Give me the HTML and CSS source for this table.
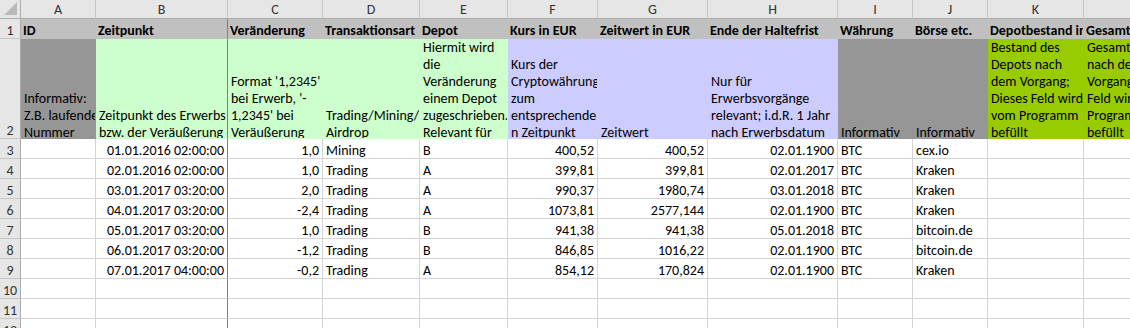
FILE: index.html
```html
<!DOCTYPE html>
<html lang="de">
<head>
<meta charset="utf-8">
<title>Transaktionen</title>
<link rel="stylesheet" href="styles.css">
</head>
<body>
<div class="sheet">
  <div class="corner"><span class="tri"></span></div>
  <div class="ch">A</div><div class="ch">B</div><div class="ch">C</div><div class="ch">D</div><div class="ch">E</div><div class="ch">F</div><div class="ch">G</div><div class="ch">H</div><div class="ch">I</div><div class="ch">J</div><div class="ch">K</div><div class="ch">L</div>

  <div class="rh">1</div>
  <div class="c hd">ID</div>
  <div class="c hd colb">Zeitpunkt</div>
  <div class="c hd">Veränderung</div>
  <div class="c hd">Transaktionsart</div>
  <div class="c hd">Depot</div>
  <div class="c hd">Kurs in EUR</div>
  <div class="c hd">Zeitwert in EUR</div>
  <div class="c hd">Ende der Haltefrist</div>
  <div class="c hd">Währung</div>
  <div class="c hd">Börse etc.</div>
  <div class="c hd">Depotbestand in EUR</div>
  <div class="c hd">Gesamtbestand</div>

  <div class="rh rh-tall">2</div>
  <div class="c ds gray">Informativ:<br>Z.B. laufende<br>Nummer</div>
  <div class="c ds green colb">Zeitpunkt des Erwerbs<br>bzw. der Veräußerung</div>
  <div class="c ds green">Format '1,2345'<br>bei Erwerb, '-<br>1,2345' bei<br>Veräußerung</div>
  <div class="c ds green">Trading/Mining/<br>Airdrop</div>
  <div class="c ds green">Hiermit wird<br>die<br>Veränderung<br>einem Depot<br>zugeschrieben.<br>Relevant für</div>
  <div class="c ds lav">Kurs der<br>Cryptowährung<br>zum<br>entsprechende<br>n Zeitpunkt</div>
  <div class="c ds lav">Zeitwert</div>
  <div class="c ds lav">Nur für<br>Erwerbsvorgänge<br>relevant; i.d.R. 1 Jahr<br>nach Erwerbsdatum</div>
  <div class="c ds gray">Informativ</div>
  <div class="c ds gray">Informativ</div>
  <div class="c ds lime">Bestand des<br>Depots nach<br>dem Vorgang;<br>Dieses Feld wird<br>vom Programm<br>befüllt</div>
  <div class="c ds lime">Gesamtbestand<br>nach dem<br>Vorgang; Dieses<br>Feld wird vom<br>Programm<br>befüllt</div>

  <div class="rh">3</div>
  <div class="c"></div><div class="c r colb">01.01.2016 02:00:00</div><div class="c r">1,0</div><div class="c">Mining</div><div class="c">B</div><div class="c r">400,52</div><div class="c r">400,52</div><div class="c r">02.01.1900</div><div class="c">BTC</div><div class="c">cex.io</div><div class="c"></div><div class="c"></div>

  <div class="rh">4</div>
  <div class="c"></div><div class="c r colb">02.01.2016 02:00:00</div><div class="c r">1,0</div><div class="c">Trading</div><div class="c">A</div><div class="c r">399,81</div><div class="c r">399,81</div><div class="c r">02.01.2017</div><div class="c">BTC</div><div class="c">Kraken</div><div class="c"></div><div class="c"></div>

  <div class="rh">5</div>
  <div class="c"></div><div class="c r colb">03.01.2017 03:20:00</div><div class="c r">2,0</div><div class="c">Trading</div><div class="c">A</div><div class="c r">990,37</div><div class="c r">1980,74</div><div class="c r">03.01.2018</div><div class="c">BTC</div><div class="c">Kraken</div><div class="c"></div><div class="c"></div>

  <div class="rh">6</div>
  <div class="c"></div><div class="c r colb">04.01.2017 03:20:00</div><div class="c r">-2,4</div><div class="c">Trading</div><div class="c">A</div><div class="c r">1073,81</div><div class="c r">2577,144</div><div class="c r">02.01.1900</div><div class="c">BTC</div><div class="c">Kraken</div><div class="c"></div><div class="c"></div>

  <div class="rh">7</div>
  <div class="c"></div><div class="c r colb">05.01.2017 03:20:00</div><div class="c r">1,0</div><div class="c">Trading</div><div class="c">B</div><div class="c r">941,38</div><div class="c r">941,38</div><div class="c r">05.01.2018</div><div class="c">BTC</div><div class="c">bitcoin.de</div><div class="c"></div><div class="c"></div>

  <div class="rh">8</div>
  <div class="c"></div><div class="c r colb">06.01.2017 03:20:00</div><div class="c r">-1,2</div><div class="c">Trading</div><div class="c">B</div><div class="c r">846,85</div><div class="c r">1016,22</div><div class="c r">02.01.1900</div><div class="c">BTC</div><div class="c">bitcoin.de</div><div class="c"></div><div class="c"></div>

  <div class="rh">9</div>
  <div class="c"></div><div class="c r colb">07.01.2017 04:00:00</div><div class="c r">-0,2</div><div class="c">Trading</div><div class="c">A</div><div class="c r">854,12</div><div class="c r">170,824</div><div class="c r">02.01.1900</div><div class="c">BTC</div><div class="c">Kraken</div><div class="c"></div><div class="c"></div>

  <div class="rh">10</div>
  <div class="c"></div><div class="c colb"></div><div class="c"></div><div class="c"></div><div class="c"></div><div class="c"></div><div class="c"></div><div class="c"></div><div class="c"></div><div class="c"></div><div class="c"></div><div class="c"></div>

  <div class="rh">11</div>
  <div class="c"></div><div class="c colb"></div><div class="c"></div><div class="c"></div><div class="c"></div><div class="c"></div><div class="c"></div><div class="c"></div><div class="c"></div><div class="c"></div><div class="c"></div><div class="c"></div>

  <div class="rh">12</div>
  <div class="c"></div><div class="c colb"></div><div class="c"></div><div class="c"></div><div class="c"></div><div class="c"></div><div class="c"></div><div class="c"></div><div class="c"></div><div class="c"></div><div class="c"></div><div class="c"></div>
</div>
</body>
</html>
```

FILE: styles.css
```css
html, body {
  margin: 0;
  padding: 0;
  background: #ffffff;
  overflow: hidden;
}

.sheet {
  display: grid;
  grid-template-columns: 21px 75px 132px 95px 97px 88px 90px 110px 130px 75px 75px 96px 150px;
  grid-template-rows: 19px 20px 100px repeat(10, 20px);
  width: 1130px;
  height: 328px;
  overflow: hidden;
  font-family: Carlito, Calibri, "Liberation Sans", sans-serif;
  font-size: 14px;
  color: #000;
}

.corner {
  position: relative;
  background: #e6e6e6;
  border-right: 1px solid #ababab;
  border-bottom: 1px solid #ababab;
  box-sizing: border-box;
}

.tri {
  position: absolute;
  right: 3px;
  bottom: 3px;
  width: 0;
  height: 0;
  border-left: 13px solid transparent;
  border-bottom: 13px solid #b9b9b9;
}

.ch {
  background: #e6e6e6;
  border-right: 1px solid #c6c6c6;
  border-bottom: 1px solid #ababab;
  box-sizing: border-box;
  display: flex;
  align-items: center;
  justify-content: center;
  color: #333;
  white-space: nowrap;
  overflow: hidden;
}

.rh {
  background: #e6e6e6;
  border-right: 1px solid #ababab;
  border-bottom: 1px solid #c6c6c6;
  box-sizing: border-box;
  display: flex;
  flex-direction: column;
  justify-content: flex-end;
  align-items: center;
  color: #333;
  line-height: 17px;
  overflow: hidden;
}

.rh::after {
  content: "";
  margin-bottom: -1px;
}

.c {
  border-right: 1px solid #d4d4d4;
  border-bottom: 1px solid #d4d4d4;
  box-sizing: border-box;
  padding: 0 3px;
  display: flex;
  flex-direction: column;
  justify-content: flex-end;
  line-height: 17px;
  white-space: nowrap;
  overflow: hidden;
}

.c::after {
  content: "";
  margin-bottom: -1px;
}

.r {
  align-items: flex-end;
  text-align: right;
}

.colb {
  border-right-color: #7f7f7f;
}

.hd {
  background: #c0c0c0;
  border-bottom-color: #c0c0c0;
  border-right-color: #c0c0c0;
  font-weight: bold;
  padding-left: 2px;
}

.hd.colb {
  border-right-color: #7f7f7f;
}

.ds::after {
  margin-bottom: -3px;
}

.gray {
  background: #969696;
  border-right-color: #969696;
  border-bottom-color: #969696;
}

.green {
  background: #ccffcc;
  border-right-color: #ccffcc;
  border-bottom-color: #ccffcc;
}

.lav {
  background: #ccccff;
  border-right-color: #ccccff;
  border-bottom-color: #ccccff;
}

.lime {
  background: #99cc00;
  border-right-color: #99cc00;
  border-bottom-color: #99cc00;
}

.green.colb {
  border-right-color: #7f7f7f;
}
```
